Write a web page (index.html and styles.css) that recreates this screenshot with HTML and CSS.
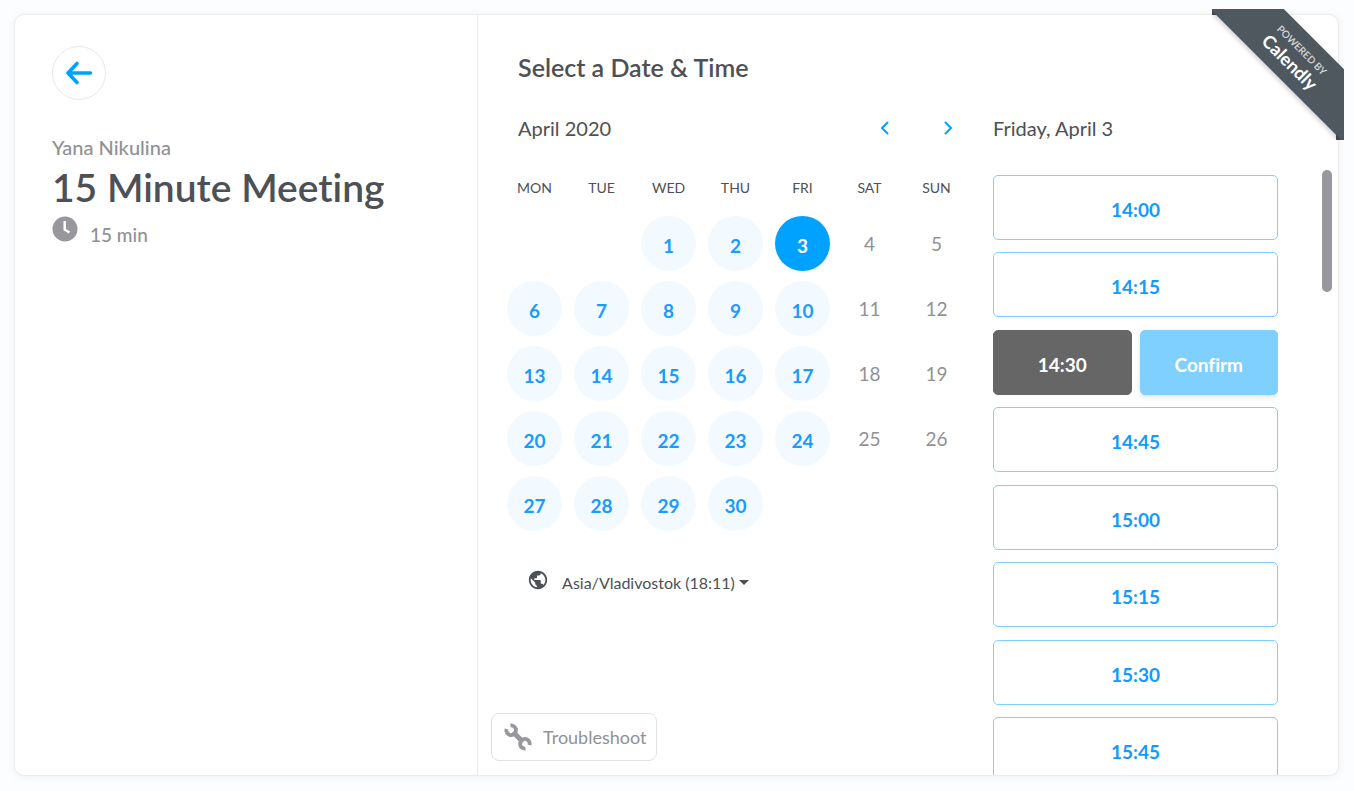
FILE: index.html
```html
<!DOCTYPE html>
<html lang="en">

<head>
    <meta charset="UTF-8">
    <title>15 Minute Meeting - Yana Nikulina</title>
    <link rel="stylesheet" href="styles.css">
</head>

<body>
    <main class="card">
        <a class="ribbon" href="#">
            <span class="ribbon-band">
                <span class="ribbon-small">POWERED BY</span>
                <span class="ribbon-name">Calendly</span>
            </span>
        </a>

        <section class="event">
            <button class="back" aria-label="Back">
                <svg width="28" height="24" viewBox="0 0 28 24">
                    <path d="M12 2.500L3 12L12 21.500M3 12H25.500" fill="none" stroke="#00a2ff" stroke-width="3.600" stroke-linecap="round" stroke-linejoin="round"/>
                </svg>
            </button>
            <div class="host">Yana Nikulina</div>
            <h1>15 Minute Meeting</h1>
            <div class="duration">
                <svg width="26" height="26" viewBox="0 0 26 26">
                    <circle cx="13" cy="13" r="12.500" fill="#97979d"/>
                    <path d="M12.700 5V13.500L17.500 16.500" fill="none" stroke="#fff" stroke-width="2.500"/>
                </svg>
                <span>15 min</span>
            </div>
        </section>

        <section class="booking">
            <div class="calendar">
                <h2>Select a Date &amp; Time</h2>
                <div class="month">
                    <span>April 2020</span>
                    <div class="month-nav">
                        <button aria-label="Previous month">
                            <svg width="10" height="16" viewBox="0 0 10 16"><path d="M8 2L2 8L8 14" fill="none" stroke="#00a2ff" stroke-width="2"/></svg>
                        </button>
                        <button aria-label="Next month">
                            <svg width="10" height="16" viewBox="0 0 10 16"><path d="M2 2L8 8L2 14" fill="none" stroke="#00a2ff" stroke-width="2"/></svg>
                        </button>
                    </div>
                </div>

                <table class="days">
                    <thead>
                        <tr>
                            <th>MON</th>
                            <th>TUE</th>
                            <th>WED</th>
                            <th>THU</th>
                            <th>FRI</th>
                            <th>SAT</th>
                            <th>SUN</th>
                        </tr>
                    </thead>
                    <tbody>
                        <tr>
                            <td></td>
                            <td></td>
                            <td><button class="day">1</button></td>
                            <td><button class="day">2</button></td>
                            <td><button class="day selected">3</button></td>
                            <td>4</td>
                            <td>5</td>
                        </tr>
                        <tr>
                            <td><button class="day">6</button></td>
                            <td><button class="day">7</button></td>
                            <td><button class="day">8</button></td>
                            <td><button class="day">9</button></td>
                            <td><button class="day">10</button></td>
                            <td>11</td>
                            <td>12</td>
                        </tr>
                        <tr>
                            <td><button class="day">13</button></td>
                            <td><button class="day">14</button></td>
                            <td><button class="day">15</button></td>
                            <td><button class="day">16</button></td>
                            <td><button class="day">17</button></td>
                            <td>18</td>
                            <td>19</td>
                        </tr>
                        <tr>
                            <td><button class="day">20</button></td>
                            <td><button class="day">21</button></td>
                            <td><button class="day">22</button></td>
                            <td><button class="day">23</button></td>
                            <td><button class="day">24</button></td>
                            <td>25</td>
                            <td>26</td>
                        </tr>
                        <tr>
                            <td><button class="day">27</button></td>
                            <td><button class="day">28</button></td>
                            <td><button class="day">29</button></td>
                            <td><button class="day">30</button></td>
                            <td></td>
                            <td></td>
                            <td></td>
                        </tr>
                    </tbody>
                </table>

                <button class="timezone">
                    <svg class="globe" width="22" height="22" viewBox="0 0 24 24">
                        <path fill="#4d5055" d="M12 2C6.480 2 2 6.480 2 12s4.480 10 10 10 10-4.480 10-10S17.520 2 12 2zm-1 17.930c-3.950-.490-7-3.850-7-7.930 0-.620.080-1.210.210-1.790L9 15v1c0 1.100.900 2 2 2v1.930zm6.900-2.540c-.260-.810-1-1.390-1.900-1.390h-1v-3c0-.550-.450-1-1-1H8v-2h2c.550 0 1-.450 1-1V7h2c1.100 0 2-.900 2-2v-.410c2.930 1.190 5 4.060 5 7.410 0 2.080-.800 3.970-2.100 5.390z"/>
                    </svg>
                    <span>Asia/Vladivostok (18:11)</span>
                    <svg width="10" height="6" viewBox="0 0 10 6"><path d="M0 0H10L5 5Z" fill="#4d5055"/></svg>
                </button>

                <button class="troubleshoot">
                    <svg width="28" height="28" viewBox="0 0 28 28">
                        <g fill="none" stroke="#97979d">
                            <path d="M9 9L19 19" stroke-width="5"/>
                            <path d="M2.500 6A4.800 4.800 0 1 0 6.500 2.500" stroke-width="3.800"/>
                            <path d="M25.500 22A4.800 4.800 0 1 0 21.500 25.500" stroke-width="3.800"/>
                        </g>
                    </svg>
                    <span>Troubleshoot</span>
                </button>
            </div>

            <div class="times">
                <div class="chosen-date">Friday, April 3</div>
                <div class="times-scroll">
                    <ul class="slots">
                        <li><button class="slot">14:00</button></li>
                        <li><button class="slot">14:15</button></li>
                        <li>
                            <button class="slot active">14:30</button>
                            <button class="slot confirm">Confirm</button>
                        </li>
                        <li><button class="slot">14:45</button></li>
                        <li><button class="slot">15:00</button></li>
                        <li><button class="slot">15:15</button></li>
                        <li><button class="slot">15:30</button></li>
                        <li><button class="slot">15:45</button></li>
                    </ul>
                    <div class="thumb"></div>
                </div>
            </div>
        </section>
    </main>

    <script>
        const days = document.querySelectorAll('.day');

        days.forEach(day => day.addEventListener('click', () => {
            document.querySelector('.day.selected').classList.remove('selected');
            day.classList.add('selected');
        }));
    </script>
</body>

</html>
```
FILE: styles.css
```css
* {
    box-sizing: border-box;
}

body {
    display: flex;
    height: 100vh;
    min-height: 700px;
    margin: 0;
    padding: 14px 15px 15px 14px;
    background-color: #fcfdff;
    color: #4d5055;
    font-family: Lato, 'Liberation Sans', sans-serif;
    font-variant-ligatures: none;
}

button {
    padding: 0;
    border: none;
    background: none;
    color: inherit;
    font-family: inherit;
    font-variant-ligatures: inherit;
    cursor: pointer;
}

h1,
h2 {
    margin: 0;
}

.card {
    position: relative;
    display: flex;
    flex: 1;
    border: 1px solid #ececec;
    border-radius: 10px;
    background-color: white;
    box-shadow: 0 1px 8px rgba(0, 0, 0, 0.06);
}

/* Left column */
.event {
    width: 35%;
    padding: 31px 37px;
    border-right: 1px solid #ececec;
}

.back {
    display: flex;
    align-items: center;
    justify-content: center;
    width: 54px;
    height: 54px;
    border: 1px solid #e8e8e8;
    border-radius: 50%;
}

.host {
    margin-top: 35px;
    color: #8f9195;
    font-size: 20px;
    font-weight: 500;
    line-height: 24px;
}

h1 {
    font-size: 39px;
    font-weight: 600;
    line-height: 57px;
}

.duration {
    display: flex;
    gap: 12px;
    color: #8f9195;
    font-size: 19px;
    font-weight: 500;
    line-height: 24px;
}

.duration span {
    padding-top: 7px;
}

/* Right column */
.booking {
    display: flex;
    flex: 1;
    min-height: 0;
}

.calendar {
    display: flex;
    flex: 1;
    flex-direction: column;
    align-items: flex-start;
    padding: 36px 0 14px;
}

h2 {
    padding-left: 40px;
    font-size: 25px;
    font-weight: 600;
    line-height: 32px;
}

.month {
    display: flex;
    justify-content: space-between;
    align-items: center;
    width: 100%;
    height: 24px;
    margin-top: 33px;
    padding: 0 40px;
    font-size: 20px;
}

.month-nav {
    display: flex;
    gap: 53px;
}

.month-nav button,
.month-nav svg {
    display: block;
}

.days {
    width: calc(100% - 46px);
    margin: 35px 23px 0;
    border-collapse: collapse;
    table-layout: fixed;
}

th {
    height: 36px;
    padding: 0 0 12px;
    font-size: 14px;
    font-weight: 400;
}

td {
    height: 65px;
    padding: 0;
    color: #8f9195;
    font-size: 19px;
    text-align: center;
}

.day {
    width: 55px;
    height: 55px;
    padding-top: 4px;
    border-radius: 50%;
    background-color: #f2faff;
    color: #1a9bff;
    font-size: 19px;
    font-weight: 700;
    vertical-align: middle;
}

.day.selected {
    background-color: #00a2ff;
    color: white;
}

.timezone {
    display: flex;
    align-items: center;
    margin: 33px 0 0 49px;
    font-size: 16px;
    line-height: 24px;
}

.globe {
    margin: 0 13px 5px 0;
}

.timezone span {
    margin-right: 4px;
}

.troubleshoot {
    display: flex;
    align-items: center;
    gap: 11px;
    height: 48px;
    margin: auto 0 0 13px;
    padding: 0 9px 0 12px;
    border: 1px solid #e2e2e2;
    border-radius: 8px;
    color: #8f9195;
    font-size: 18px;
}

.times {
    display: flex;
    flex-direction: column;
    width: 345px;
    padding: 101px 6px 0 0;
}

.chosen-date {
    font-size: 20px;
    line-height: 24px;
}

.times-scroll {
    display: flex;
    flex: 1;
    justify-content: space-between;
    min-height: 0;
    margin-top: 30px;
}

.slots {
    width: 285px;
    margin: 0;
    padding: 5px 0 0;
    overflow-y: auto;
    list-style: none;
    scrollbar-width: none;
}

.slots li {
    display: flex;
    gap: 8px;
    margin-bottom: 12px;
}

.slots li:nth-child(even) {
    margin-bottom: 13px;
}

.slot {
    flex: 1;
    height: 65px;
    padding-top: 4px;
    border: 1px solid #7fd0ff;
    border-radius: 5px;
    color: #0f9bff;
    font-size: 19px;
    font-weight: 700;
}

.slot.active {
    border-color: #666;
    background-color: #666;
    color: white;
}

.slot.confirm {
    background-color: #7fd0ff;
    box-shadow: 0 2px 5px rgba(0, 0, 0, 0.12);
    color: white;
}

.thumb {
    width: 10px;
    height: 122px;
    border-radius: 5px;
    background-color: #97979d;
}

/* Corner ribbon */
.ribbon {
    position: absolute;
    top: -6px;
    right: -6px;
    width: 132px;
    height: 131px;
    overflow: hidden;
    color: white;
    text-align: center;
    text-decoration: none;
}

.ribbon::before,
.ribbon::after {
    content: '';
    position: absolute;
    width: 8px;
    height: 6px;
    background-color: #4a5158;
}

.ribbon::before {
    top: 0;
    left: 0;
}

.ribbon::after {
    right: 0;
    bottom: 0;
}

.ribbon-band {
    position: absolute;
    z-index: 1;
    top: 22px;
    left: -17px;
    display: flex;
    flex-direction: column;
    justify-content: center;
    width: 200px;
    height: 52px;
    background-color: #50585f;
    box-shadow: 0 2px 5px rgba(0, 0, 0, 0.2);
    transform: rotate(45deg);
}

.ribbon-small {
    color: #d6d9db;
    font-size: 10px;
    font-weight: 600;
    line-height: 14px;
}

.ribbon-name {
    font-size: 18px;
    font-weight: 700;
    line-height: 20px;
}
```
